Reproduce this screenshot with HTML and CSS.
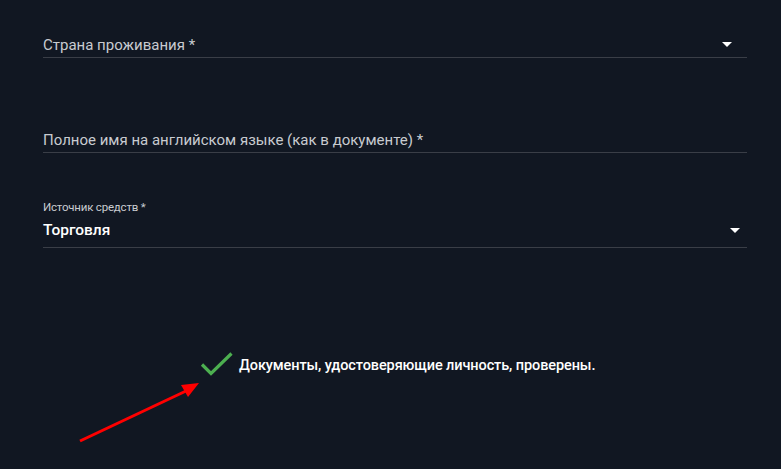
FILE: index.html
```html
<!DOCTYPE html>
<html lang="ru">
<head>
    <meta charset="UTF-8">
    <title>Верификация</title>
    <link rel="stylesheet" href="styles.css">
</head>
<body>
    <div class="form">
        <div class="field field-select" id="country">
            <span class="field-label">Страна проживания *</span>
            <span class="caret"></span>
        </div>

        <div class="field field-text" id="fullName">
            <span class="field-label">Полное имя на английском языке (как в документе) *</span>
        </div>

        <div class="field field-filled" id="source">
            <span class="field-small">Источник средств *</span>
            <div class="field-row">
                <span class="field-value">Торговля</span>
                <span class="caret caret-end"></span>
            </div>
        </div>

        <div class="verified">
            <svg class="check" width="34" height="26" viewBox="0 0 34 26">
                <path d="M2 12.5 L11 21.5 L31.5 1.5" fill="none" stroke="#4caf50" stroke-width="3.2"/>
            </svg>
            <span>Документы, удостоверяющие личность, проверены.</span>
        </div>
    </div>

    <!-- annotation arrow -->
    <svg class="pointer" width="781" height="469" viewBox="0 0 781 469">
        <line x1="80" y1="441" x2="186" y2="391" stroke="#f00" stroke-width="3"/>
        <polygon points="199,383 181,385 188,397" fill="#f00"/>
    </svg>
</body>
</html>
```

FILE: styles.css
```css
:root {
    --bg: #111722;
    --line: #3a3e47;
    --label: #c8cbd0;
    --light: #ffffff;
    --ok: #4caf50;
}

* {
    margin: 0;
    padding: 0;
    box-sizing: border-box;
}

body {
    background-color: var(--bg);
    font-family: Roboto, 'Noto Sans', sans-serif;
    color: var(--label);
    width: 781px;
    height: 469px;
    overflow: hidden;
    position: relative;
}

.form {
    padding: 32px 34px 0 43px;
}

.field {
    border-bottom: 1px solid var(--line);
}

.field-select,
.field-text {
    display: flex;
    align-items: center;
    justify-content: space-between;
    height: 26px;
    font-size: 15px;
}

.field-text {
    margin-top: 69px;
}

.caret {
    width: 0;
    height: 0;
    border-left: 5px solid transparent;
    border-right: 5px solid transparent;
    border-top: 5px solid var(--light);
    margin-right: 15px;
}

.caret-end {
    margin-right: 7px;
}

.field-filled {
    margin-top: 46px;
    padding-bottom: 5px;
}

.field-small {
    display: block;
    font-size: 11.5px;
    line-height: 16px;
    letter-spacing: -0.2px;
}

.field-row {
    display: flex;
    align-items: center;
    justify-content: space-between;
    height: 24px;
    margin-top: 3px;
}

.field-value {
    font-size: 15.5px;
    font-weight: 500;
    color: var(--light);
}

.verified {
    display: flex;
    align-items: center;
    gap: 5px;
    margin-top: 104px;
    padding-left: 157px;
    color: var(--light);
    font-size: 14.5px;
    font-weight: 500;
    letter-spacing: -0.1px;
}

.pointer {
    position: absolute;
    left: 0;
    top: 0;
}
```
